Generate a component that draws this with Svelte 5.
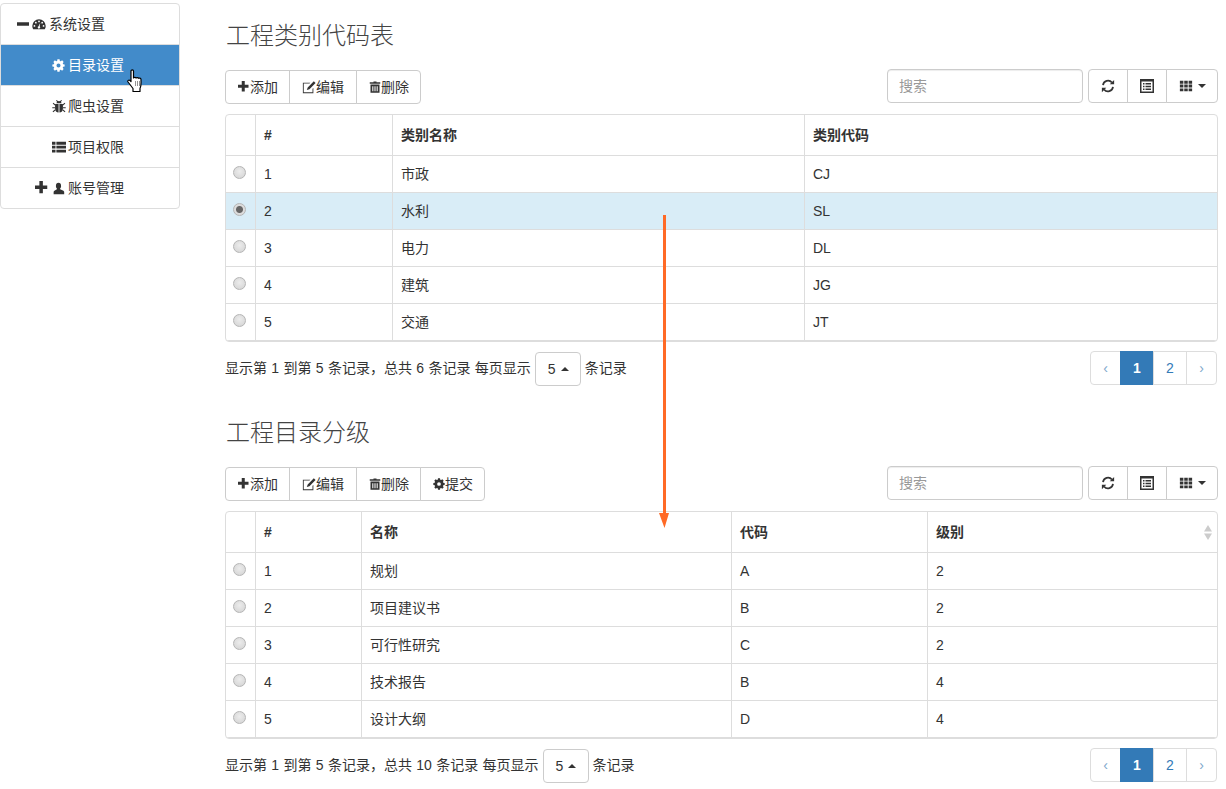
<script>
  const paths = {
    minus: 'M1 6h14v4H1z',
    plus: 'M6 1h4v5h5v4h-5v5H6v-5H1V6h5z',
    dashboard: 'M8 2.5A7.7 7.7 0 0 0 .3 10.2c0 1.5.4 2.8 1.1 3.8h13.2c.7-1 1.1-2.3 1.1-3.8A7.7 7.7 0 0 0 8 2.5zM8 4a1 1 0 1 1 0 2 1 1 0 0 1 0-2zM4.400 5.500a1 1 0 1 1 0 2 1 1 0 0 1 0-2zM11.600 5.500a1 1 0 1 1 0 2 1 1 0 0 1 0-2zM2.800 9.200a1 1 0 1 1 0 2 1 1 0 0 1 0-2zM13.200 9.200a1 1 0 1 1 0 2 1 1 0 0 1 0-2zM9.500 6.500l-.7 4.200a1.400 1.400 0 1 1-1.300-.2z',
    cog: 'M6.500.5h3l.4 2.100 1.300.5 1.800-1.200 2.100 2.100-1.200 1.800.5 1.300 2.100.4v3l-2.100.4-.5 1.300 1.200 1.800-2.100 2.100-1.800-1.200-1.300.5-.4 2.100h-3l-.4-2.100-1.300-.5-1.800 1.200-2.100-2.100 1.200-1.800-.5-1.300-2.100-.4v-3l2.100-.4.5-1.300-1.200-1.800 2.100-2.100 1.800 1.200 1.300-.5zM8 6.200a2.800 2.800 0 1 0 0 5.600 2.800 2.800 0 0 0 0-5.600z',
    bug: 'M5.500 1l1.400 1.600a3 3 0 0 1 2.200 0L10.500 1l.9.8-1.300 1.500c.5.4.8.9.9 1.500H5c.1-.6.4-1.100.9-1.500L4.600 1.800zM3.800 5.600h3.700V15.500c-2.400-.2-4-1.800-4-4.500V6.500c0-.4 0-.7.3-.9zM8.500 5.600h3.700c.3.200.3.500.3.900V11c0 2.700-1.600 4.300-4 4.500zM.8 5l1-.6 1.900 2-.5 1.100zM15.200 5l-1-.6-1.900 2 .5 1.100zM.3 9.300h3.300v1.200H.3zM12.400 9.300h3.300v1.200h-3.300zM3.200 12l.6 1-2.300 2-.9-.8zM12.800 12l-.6 1 2.300 2 .9-.8z',
    list: 'M0 2h4v3.300H0zM5 2h11v3.300H5zM0 6.500h4v3.300H0zM5 6.500h11v3.300H5zM0 11h4v3.300H0zM5 11h11v3.300H5z',
    user: 'M8 1c2 0 3.200 1.500 3.200 3.800 0 1.300-.5 2.500-1.200 3.200v1l3.500 1.500c.8.400 1.500 1 1.500 2V15H2v-2.500c0-1 .7-1.600 1.500-2L6 9V8c-.7-.7-1.200-1.900-1.200-3.200C4.800 2.500 6 1 8 1z',
    edit: 'M1 3h8.500L8.500 4H2v10h10v-4l1-1v6H1zM13.500 1.500l2 2L8.500 10.500l-3 1 1-3z',
    trash: 'M6 .5h4v1.200h5V3.800H1V1.700h5zM2 4.800h12v11H2zM4.400 7v6.800h1.400V7zM7.300 7v6.800h1.400V7zM10.200 7v6.800h1.400V7z',
    listalt: 'M1 1h14v14H1zM2.500 3.500v10h11v-10zM4 5h1.500v1.500H4zM6.500 5H12v1.500H6.500zM4 7.800h1.500v1.500H4zM6.500 7.800H12v1.500H6.500zM4 10.500h1.500V12H4zM6.500 10.500H12V12H6.500z',
    th: 'M1 2h4v3.300H1zM6 2h4v3.300H6zM11 2h4v3.300h-4zM1 6.400h4v3.300H1zM6 6.400h4v3.300H6zM11 6.400h4v3.300h-4zM1 10.800h4v3.300H1zM6 10.800h4v3.300H6zM11 10.800h4v3.300h-4z'
  };

  const boxes = {
    cog: '-1 0 18 18',
    plus: '1 1 16 16',
    minus: '1 1 14 14',
    listalt: '1 1 14 14'
  };

  const menu = [
    { level: 'top', pre: 'minus', icon: 'dashboard', label: '系统设置' },
    { level: 'sub', icon: 'cog', label: '目录设置', active: true },
    { level: 'sub', icon: 'bug', label: '爬虫设置' },
    { level: 'sub', icon: 'list', label: '项目权限' },
    { level: 'mid', pre: 'plus', icon: 'user', label: '账号管理' }
  ];

  const baseActions = [
    { icon: 'plus', label: '添加' },
    { icon: 'edit', label: '编辑' },
    { icon: 'trash', label: '删除' }
  ];

  const sections = [
    {
      id: 'a',
      title: '工程类别代码表',
      actions: baseActions,
      widths: [29, 137, 412, 413],
      heads: ['#', '类别名称', '类别代码'],
      selected: 1,
      rows: [
        [1, '市政', 'CJ'], [2, '水利', 'SL'], [3, '电力', 'DL'], [4, '建筑', 'JG'], [5, '交通', 'JT']
      ],
      total: 6,
      sortLast: false
    },
    {
      id: 'b',
      title: '工程目录分级',
      actions: [...baseActions, { icon: 'cog', label: '提交' }],
      widths: [29, 106, 370, 196, 290],
      heads: ['#', '名称', '代码', '级别'],
      selected: -1,
      rows: [
        [1, '规划', 'A', 2], [2, '项目建议书', 'B', 2], [3, '可行性研究', 'C', 2], [4, '技术报告', 'B', 4], [5, '设计大纲', 'D', 4]
      ],
      total: 10,
      sortLast: true
    }
  ];
</script>

{#snippet icon(name, cls = '')}
  <svg class="icon {name} {cls}" viewBox={boxes[name] ?? '0 0 16 16'} aria-hidden="true">
    <path fill="currentColor" fill-rule="evenodd" d={paths[name]} />
  </svg>
{/snippet}

<div class="page">
  <nav class="menu">
    {#each menu as item}
      <div class="menu-item {item.level}" class:active={item.active}>
        {#if item.pre}{@render icon(item.pre, 'pre')}{/if}
        {@render icon(item.icon)}
        <span class="cjk">{item.label}</span>
      </div>
    {/each}
  </nav>

  <main class="content">
    {#each sections as s}
      <section class="block">
        <h3>{s.title}</h3>

        <div class="toolbar">
          <div class="btn-group">
            {#each s.actions as a}
              <button class="btn action">{@render icon(a.icon)}<span class="cjk">{a.label}</span></button>
            {/each}
          </div>
          <div class="tools">
            <input class="search" placeholder="搜索" />
            <div class="btn-group">
              <button class="btn tool" aria-label="刷新">
                <svg class="icon" viewBox="0 0 16 16" aria-hidden="true">
                  <path d="M2.300 7A5.800 5.800 0 0 1 12.500 4" fill="none" stroke="currentColor" stroke-width="2" />
                  <path d="M10 6h5V1z" fill="currentColor" />
                  <path d="M13.700 9A5.800 5.800 0 0 1 3.500 12" fill="none" stroke="currentColor" stroke-width="2" />
                  <path d="M6 10H1v5z" fill="currentColor" />
                </svg>
              </button>
              <button class="btn tool" aria-label="切换">{@render icon('listalt')}</button>
              <button class="btn tool columns" aria-label="列">{@render icon('th')}<i class="caret"></i></button>
            </div>
          </div>
        </div>

        <div class="table-wrap">
          <table>
            <colgroup>
              {#each s.widths as w}<col style="width:{w}px" />{/each}
            </colgroup>
            <thead>
              <tr>
                <th></th>
                {#each s.heads as h, i}
                  <th>
                    <div class="th-inner">
                      <span class:cjk={i > 0}>{h}</span>
                      {#if s.sortLast && i === s.heads.length - 1}
                        <svg class="sort" viewBox="0 0 8 15" aria-hidden="true">
                          <path d="M4 0l4 6.500H0z" fill="#ccc" />
                          <path d="M4 15L0 8.500h8z" fill="#ccc" />
                        </svg>
                      {/if}
                    </div>
                  </th>
                {/each}
              </tr>
            </thead>
            <tbody>
              {#each s.rows as row, r}
                <tr class:selected={r === s.selected}>
                  <td><input class="radio" type="radio" name={s.id} checked={r === s.selected} /></td>
                  {#each row as cell, c}<td class:name={c === 1}>{cell}</td>{/each}
                </tr>
              {/each}
            </tbody>
          </table>
        </div>

        <div class="footer">
          <div class="info">
            <span class="note wide">显示第 1 到第 5 条记录，总共 {s.total} 条记录 每页显示</span>
            <button class="btn size">5<i class="caret up"></i></button>
            <span class="note">条记录</span>
          </div>
          <div class="pagination">
            <a class="muted" href="#p">‹</a>
            <a class="current" href="#p">1</a>
            <a href="#p">2</a>
            <a class="muted" href="#p">›</a>
          </div>
        </div>
      </section>
    {/each}
  </main>

  <svg class="arrow" viewBox="0 0 10 313" aria-hidden="true">
    <path d="M4 0h3v298h3L5.500 313 0 298h4z" fill="#ff6a26" />
  </svg>

  <svg class="cursor" viewBox="0 0 18 24" aria-hidden="true">
    <path d="M4 2c0-1.400 2.500-1.400 2.500 0v7c.5-.8 2.200-.8 2.500 0 .5-.6 2.200-.6 2.500.3.600-.5 2.500-.3 2.500 1.200 0 3 .5 6-1 9v3H6v-3c-1.500-2-3-4-5-6.500-.8-1.200.8-2.600 2-1.500l1 1z" fill="#fff" stroke="#000" stroke-width="1.200" stroke-linejoin="round" />
    <path d="M8.500 12v5M10.500 12v5M12.500 12v5" stroke="#777" stroke-width=".8" fill="none" />
  </svg>
</div>

<style>
  :global(body) {
    margin: 0;
    background: #fff;
    color: #333;
    font-family: "Liberation Sans", "Noto Sans CJK SC", sans-serif;
    font-size: 14px;
  }
  .page {
    position: relative;
    display: flex;
    align-items: flex-start;
    width: 1226px;
    height: 789px;
    overflow: hidden;
  }
  .icon {
    width: 12px;
    height: 12px;
    flex: none;
    display: inline-block;
  }
  .cjk {
    padding-bottom: 2px;
  }
  .note {
    padding-bottom: 4px;
  }

  .menu {
    width: 180px;
    box-sizing: border-box;
    margin-top: 3px;
    border: 1px solid #ddd;
    border-radius: 4px;
    overflow: hidden;
  }
  .menu-item {
    display: flex;
    align-items: center;
    height: 40px;
    box-sizing: border-box;
    gap: 2px;
    border-top: 1px solid #ddd;
  }
  .menu-item:first-child {
    border-top: 0;
  }
  .menu-item + .menu-item {
    height: 41px;
  }
  .menu-item :global(.icon) {
    width: 14px;
    height: 14px;
  }
  .menu-item :global(.cog) {
    width: 13px;
    height: 13px;
    margin-right: 1px;
  }
  .top { padding-left: 16px; gap: 3px; }
  .sub { padding-left: 51px; }
  .mid { padding-left: 34px; gap: 3px; }
  .top :global(.pre) {
    width: 12px;
    height: 12px;
  }
  .mid :global(.user) {
    width: 13px;
    height: 13px;
  }
  .menu-item.active {
    background: #428bca;
    color: #fff;
  }

  .content {
    width: 993px;
    margin-left: 45px;
  }
  h3 {
    margin: 23px 0 21px;
    font-size: 24px;
    line-height: 26px;
    font-weight: 300;
    color: #444;
    padding-left: 1px;
  }
  .block + .block {
    margin-top: 34px;
  }

  .toolbar {
    display: flex;
    justify-content: space-between;
    align-items: flex-start;
    height: 34px;
    margin-bottom: 10px;
  }
  .tools {
    display: flex;
    gap: 5px;
    margin-top: -1px;
  }
  .search {
    width: 196px;
    height: 34px;
    box-sizing: border-box;
    padding: 6px 11px;
    border: 1px solid #ccc;
    border-radius: 4px;
    font: inherit;
    box-shadow: inset 0 1px 1px rgba(0, 0, 0, 0.075);
  }
  .search::placeholder {
    color: #999;
  }
  .btn-group {
    display: flex;
  }
  .btn {
    display: inline-flex;
    align-items: center;
    justify-content: center;
    height: 34px;
    box-sizing: border-box;
    border: 1px solid #ccc;
    background: #fff;
    color: #333;
    font: inherit;
    padding: 0 12px;
  }
  .btn-group .btn + .btn {
    margin-left: -1px;
  }
  .btn-group .btn:first-child {
    border-radius: 4px 0 0 4px;
  }
  .btn-group .btn:last-child {
    border-radius: 0 4px 4px 0;
  }
  .action {
    padding: 0 11px 0 12px;
  }
  .action:nth-child(2) {
    padding-right: 12px;
  }
  .action :global(.edit) {
    width: 14px;
    height: 14px;
  }
  .tool {
    width: 40px;
    padding: 0;
  }
  .tool .icon,
  .tool :global(.icon) {
    width: 14px;
    height: 14px;
  }
  .columns {
    width: 52px;
    gap: 5px;
  }
  .caret {
    display: inline-block;
    width: 0;
    height: 0;
    border-left: 4px solid transparent;
    border-right: 4px solid transparent;
    border-top: 4px solid #333;
  }
  .caret.up {
    border-top: 0;
    border-bottom: 4px solid #333;
    margin-left: 5px;
  }

  .table-wrap {
    border: 1px solid #ddd;
    border-radius: 4px;
    overflow: hidden;
  }
  table {
    width: 991px;
    table-layout: fixed;
    border-collapse: separate;
    border-spacing: 0;
  }
  th {
    height: 40px;
    box-sizing: border-box;
    padding: 0 8px;
    text-align: left;
    font-weight: 700;
    border-left: 1px solid #ddd;
  }
  .th-inner {
    display: flex;
    justify-content: space-between;
    align-items: center;
  }
  .sort {
    width: 8px;
    height: 15px;
    margin-right: -3px;
  }
  td {
    height: 37px;
    box-sizing: border-box;
    padding: 0 8px;
    border-top: 1px solid #ddd;
    border-left: 1px solid #ddd;
  }
  td.name {
    padding-bottom: 2px;
  }
  th:first-child,
  td:first-child {
    border-left: 0;
    padding: 0;
    text-align: center;
  }
  tbody tr:last-child td {
    height: 38px;
    border-bottom: 1px solid #ddd;
  }
  tr.selected td {
    background: #d9edf7;
  }
  .radio {
    appearance: none;
    display: block;
    width: 13px;
    height: 13px;
    margin: -4px 0 0 7px;
    border: 1px solid #b5b5b5;
    border-radius: 50%;
    background: radial-gradient(circle at 50% 40%, #ececec, #d2d2d2);
  }
  .radio:checked {
    background: radial-gradient(circle, #666 0 3px, #dcdcdc 4px);
  }

  .footer {
    display: flex;
    justify-content: space-between;
    align-items: flex-start;
    margin-top: 9px;
  }
  .info {
    display: flex;
    align-items: center;
    gap: 4px;
    margin-top: 1px;
  }
  .wide {
    word-spacing: 0.45px;
  }
  .size {
    width: 46px;
    padding: 0 0 0 12px;
    justify-content: flex-start;
    border-radius: 4px;
  }
  .pagination {
    display: flex;
    margin-right: 1px;
  }
  .pagination a {
    display: flex;
    align-items: center;
    justify-content: center;
    width: 34px;
    height: 34px;
    box-sizing: border-box;
    border: 1px solid #ddd;
    margin-left: -1px;
    color: #337ab7;
    text-decoration: none;
  }
  .pagination a:first-child {
    width: 31px;
    margin-left: 0;
    border-radius: 4px 0 0 4px;
  }
  .pagination a:last-child {
    width: 31px;
    border-radius: 0 4px 4px 0;
  }
  .pagination .muted {
    color: #7fa8cc;
  }
  .pagination .current {
    background: #337ab7;
    border-color: #337ab7;
    color: #fff;
    font-weight: 700;
  }

  .arrow {
    position: absolute;
    left: 659px;
    top: 215px;
    width: 10px;
    height: 313px;
  }
  .cursor {
    position: absolute;
    left: 127px;
    top: 69px;
    width: 18px;
    height: 24px;
  }
</style>
